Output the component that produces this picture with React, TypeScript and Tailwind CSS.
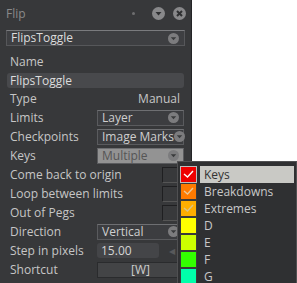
import React from 'react';

const font = { fontFamily: '"Open Sans", "DejaVu Sans", sans-serif' };

function Chevron({ size = 11 }: { size?: number }) {
  return (
    <svg width={size} height={size} viewBox="0 0 12 12" className="shrink-0">
      <circle cx="6" cy="6" r="6" fill="#7c7c7e" />
      <path d="M3 4.5 L9 4.5 L6 8 Z" fill="#3a3b3d" />
    </svg>
  );
}

function Select({ value, muted = false }: { value: string; muted?: boolean }) {
  return (
    <div
      className={
        'flex h-4 w-[87px] items-center justify-between border border-[#5a5b5e] border-t-[#6e6f72] pl-1 pr-[4px] text-[12px] leading-none ' +
        (muted ? 'bg-[#939393] text-[#555]' : 'bg-[#3c3d40] text-[#cfcfcf]')
      }
    >
      <span className="whitespace-nowrap">{value}</span>
      <Chevron />
    </div>
  );
}

function Row({ label, children }: { label: string; children?: React.ReactNode }) {
  return (
    <div className="flex h-[19px] items-center pl-[10px] pr-[7px]">
      <span className="flex-1 text-[12px] leading-none text-[#c6c6c6]">{label}</span>
      {children}
    </div>
  );
}

function Checkbox() {
  return (
    <div className="mr-[6px] h-4 w-4 border border-[#1f1f21] border-b-[#555] border-r-[#555] bg-[#38393b]" />
  );
}

const items = [
  { name: 'Keys', color: '#ee0000', check: '#ffffff', active: true },
  { name: 'Breakdowns', color: '#ff7a00', check: '#e8c89a' },
  { name: 'Extremes', color: '#ffae00', check: '#d8c48a' },
  { name: 'D', color: '#ffff00' },
  { name: 'E', color: '#ccff00' },
  { name: 'F', color: '#33ff00' },
  { name: 'G', color: '#00ffaa' },
];

export default function App() {
  return (
    <div className="relative h-[283px] w-[297px] overflow-hidden bg-white" style={font}>
      <div className="h-full w-[192px] border-r border-[#242426] bg-[#37383a]">
        <div className="flex h-[27px] items-center pl-[6px] pr-[5px]">
          <span className="flex-1 text-[12px] text-[#8a8a8a]">Flip</span>
          <div className="mr-[17px] h-[3px] w-[3px] rounded-full bg-[#6e6e70]" />
          <svg width="13" height="13" viewBox="0 0 13 13" className="mr-[8px]">
            <circle cx="6.5" cy="6.5" r="6.5" fill="#88888a" />
            <path d="M3.5 5 L9.5 5 L6.5 8.5 Z" fill="#2e2f31" />
          </svg>
          <svg width="13" height="13" viewBox="0 0 13 13">
            <circle cx="6.5" cy="6.5" r="6.5" fill="#88888a" />
            <path d="M4 4 L9 9 M9 4 L4 9" stroke="#2e2f31" strokeWidth="2" />
          </svg>
        </div>
        <div className="mx-[6px] mt-[3px] flex h-4 items-center justify-between border border-[#56575a] border-t-[#7a7b7e] bg-[#3e3f42] pl-1 pr-[5px] text-[12px] leading-none text-[#dcdcdc]">
          <span>FlipsToggle</span>
          <Chevron />
        </div>
        <div className="mt-[8px] flex h-[15px] items-center pl-[10px] text-[12px] leading-none text-[#c6c6c6]">Name</div>
        <div className="mx-[7px] mt-[4px] flex h-[15px] items-center rounded-[3px] bg-[#48494c] pl-[3px] text-[12px] leading-none text-[#dcdcdc]">
          FlipsToggle
        </div>
        <div className="mt-px">
          <Row label="Type">
            <span className="pr-[4px] text-[12px] leading-none text-[#c6c6c6]">Manual</span>
          </Row>
          <Row label="Limits">
            <Select value="Layer" />
          </Row>
          <Row label="Checkpoints">
            <Select value="Image Marks" />
          </Row>
          <Row label="Keys">
            <Select value="Multiple" muted />
          </Row>
          <Row label="Come back to origin">
            <Checkbox />
          </Row>
          <Row label="Loop between limits">
            <Checkbox />
          </Row>
          <Row label="Out of Pegs">
            <Checkbox />
          </Row>
          <Row label="Direction">
            <Select value="Vertical" />
          </Row>
          <Row label="Step in pixels">
            <div className="flex w-[87px] items-center">
              <div className="flex h-[15px] w-[62px] items-center rounded-[3px] bg-[#444548] pl-[4px] text-[12px] leading-none text-[#d4d4d4]">
                15.00
              </div>
              <span className="ml-[10px] text-[8px] text-[#58595b]">◀</span>
            </div>
          </Row>
          <Row label="Shortcut">
            <div className="flex h-4 w-[87px] items-center justify-center border border-[#2a2b2d] bg-[#434446] text-[12px] leading-none text-[#cfcfcf]">
              [W]
            </div>
          </Row>
        </div>
      </div>

      <div className="absolute left-[177px] top-[161px] w-[120px] border border-[#505052] bg-[#2f3032] pt-[4px] pb-2">
        {items.map((it) => (
          <div key={it.name} className="flex h-[17px] items-center">
            <div
              className={
                'ml-[2px] flex h-[17px] w-[17px] items-center justify-center border ' +
                (it.active ? 'border-[#bdbdbd]' : 'border-[#3a3a3a]')
              }
              style={{ backgroundColor: it.color }}
            >
              {it.check && (
                <svg width="11" height="9" viewBox="0 0 11 9">
                  <path d="M1 4 L4.5 7 L10 1" stroke={it.check} strokeWidth="1.4" fill="none" />
                </svg>
              )}
            </div>
            <div
              className={
                'ml-[3px] mr-[2px] flex h-[17px] flex-1 items-center pl-[4px] text-[12px] leading-none ' +
                (it.active ? 'bg-[#c9c9c5] text-[#333]' : 'text-[#c8c8c8]')
              }
            >
              {it.name}
            </div>
          </div>
        ))}
      </div>
    </div>
  );
}
